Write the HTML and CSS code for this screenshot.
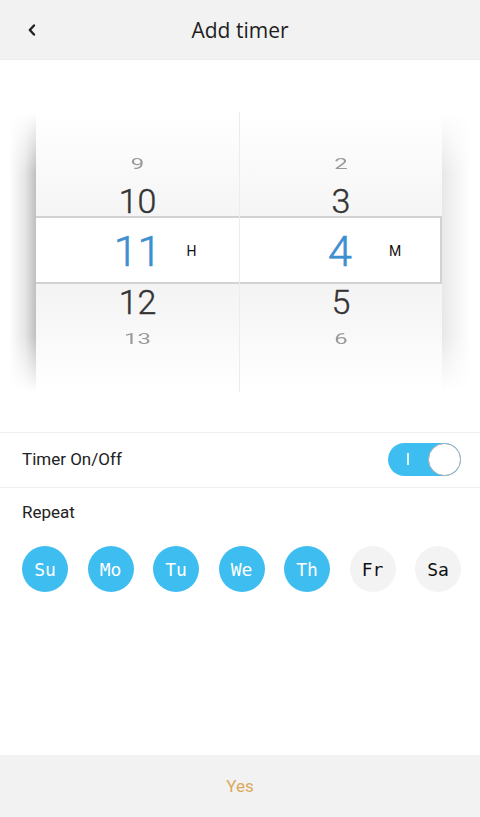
FILE: index.html
```html
<!DOCTYPE html>
<html lang="en">

<head>
  <meta charset="UTF-8">
  <meta name="viewport" content="width=device-width, initial-scale=1.0">
  <title>Add timer</title>
  <link rel="stylesheet" href="styles.css">
</head>

<body>
  <header class="topbar">
    <button class="back" aria-label="Back">
      <svg width="10" height="14" viewBox="0 0 10 14">
        <polyline points="7,2.5 2.8,7 7,11.5" fill="none" stroke="#222" stroke-width="2.4" stroke-linecap="round" stroke-linejoin="round"/>
      </svg>
    </button>
    <h1 class="title">Add timer</h1>
  </header>

  <section class="picker-area">
    <div class="shade shade-left"></div>
    <div class="picker">
      <div class="wheel">
        <div class="item far">9</div>
        <div class="item near">10</div>
        <div class="item selected"><span></span><span class="value">11</span><span class="unit">H</span></div>
        <div class="item near">12</div>
        <div class="item far">13</div>
      </div>
      <div class="wheel wheel-right">
        <div class="item far">2</div>
        <div class="item near">3</div>
        <div class="item selected"><span></span><span class="value">4</span><span class="unit">M</span></div>
        <div class="item near">5</div>
        <div class="item far">6</div>
      </div>
    </div>
    <div class="shade shade-right"></div>
  </section>

  <div class="row timer-row">
    <span class="label">Timer On/Off</span>
    <div class="switch on">
      <span class="mark"></span>
      <span class="knob"></span>
    </div>
  </div>

  <div class="row repeat-row">
    <span class="label">Repeat</span>
  </div>

  <div class="days">
    <span class="day active">Su</span>
    <span class="day active">Mo</span>
    <span class="day active">Tu</span>
    <span class="day active">We</span>
    <span class="day active">Th</span>
    <span class="day">Fr</span>
    <span class="day">Sa</span>
  </div>

  <footer class="footer">
    <button class="confirm">Yes</button>
  </footer>
</body>

</html>
```

FILE: styles.css
```css
html, body {
  height: 100%;
}

body {
  margin: 0;
  font-family: Roboto, "Noto Sans", Arial, sans-serif;
  background: #fff;
  color: #222;
  display: flex;
  flex-direction: column;
}

.topbar {
  height: 60px;
  flex-shrink: 0;
  background: #f2f2f2;
  border-bottom: 1px solid #ededed;
  box-sizing: border-box;
  display: grid;
  grid-template-columns: 64px 1fr 64px;
  align-items: center;
}

.back {
  background: none;
  border: none;
  padding: 0;
  height: 100%;
  display: flex;
  align-items: center;
  justify-content: center;
  cursor: pointer;
}

.title {
  margin: 0;
  text-align: center;
  font-weight: 400;
  font-size: 21px;
  color: #1e1e1e;
  font-family: "Open Sans", Roboto, sans-serif;
}

/* picker */
.picker-area {
  display: flex;
  padding: 52px 0 40px;
}

.shade {
  height: 280px;
  -webkit-mask-image: linear-gradient(to bottom, transparent 0, #000 22%, #000 80%, transparent 100%);
  mask-image: linear-gradient(to bottom, transparent 0, #000 22%, #000 80%, transparent 100%);
}

.shade-left {
  width: 36px;
  background: linear-gradient(to right, rgba(0, 0, 0, 0) 25%, rgba(0, 0, 0, 0.1) 70%, rgba(0, 0, 0, 0.25) 100%);
}

.shade-right {
  width: 38px;
  background: linear-gradient(to left, rgba(0, 0, 0, 0) 25%, rgba(0, 0, 0, 0.04) 60%, rgba(0, 0, 0, 0.09) 100%);
}

.picker {
  flex: 1;
  height: 280px;
  display: grid;
  grid-template-columns: 1fr 1fr;
  background: linear-gradient(to bottom, #fff 0, #f5f5f5 37%, #f4f4f4 63%, #fff 100%);
}

.wheel {
  display: flex;
  flex-direction: column;
  padding-top: 36px;
}

.wheel-right {
  border-left: 1px solid #ececec;
}

.item {
  display: flex;
  align-items: center;
  justify-content: center;
  line-height: 1;
  box-sizing: border-box;
}

.far {
  height: 30px;
  font-size: 24px;
  color: #9a9a9a;
  transform: scaleY(0.62);
}

.wheel .far:first-child {
  padding-top: 4px;
}

.wheel .far:last-child {
  padding-top: 8px;
}

.near {
  height: 38px;
  font-size: 34px;
  font-weight: 300;
  color: #333;
  -webkit-text-stroke: 0.4px #333;
}

.wheel .near:nth-child(2) {
  padding-top: 7px;
}

.wheel .near:nth-child(4) {
  padding-bottom: 2px;
}

.selected {
  height: 68px;
  background: #fff;
  border-top: 2px solid #d2d2d2;
  border-bottom: 2px solid #d2d2d2;
  display: grid;
  grid-template-columns: 1fr 98px 1fr;
  align-items: center;
}

.wheel-right .selected {
  border-right: 2px solid #d2d2d2;
}

.value {
  text-align: center;
  font-size: 43px;
  color: #3d8fd0;
  font-weight: 300;
  -webkit-text-stroke: 0.6px #3d8fd0;
  padding-top: 2px;
}

.unit {
  font-size: 14px;
  color: #111;
  padding-top: 2px;
}

/* rows */
.row {
  display: flex;
  align-items: center;
  justify-content: space-between;
  padding: 0 19px 0 22px;
}

.label {
  font-size: 17px;
  color: #222;
}

.timer-row {
  height: 56px;
  padding-bottom: 2px;
  box-sizing: border-box;
  border-top: 1px solid #efefef;
  border-bottom: 1px solid #efefef;
}

.switch {
  width: 73px;
  height: 33px;
  border-radius: 17px;
  background: #3ebdf1;
  display: flex;
  align-items: center;
  justify-content: space-between;
  padding: 0 0 0 19px;
  box-sizing: border-box;
}

.mark {
  width: 2px;
  height: 12px;
  background: #dff4fd;
}

.knob {
  width: 33px;
  height: 33px;
  border-radius: 50%;
  background: #fff;
  border: 1.5px solid #a6adb1;
  box-sizing: border-box;
}

.repeat-row {
  height: 48px;
}

.days {
  display: flex;
  justify-content: space-between;
  padding: 10px 19px 0 22px;
}

.day {
  width: 46px;
  height: 46px;
  border-radius: 50%;
  background: #f3f3f3;
  color: #111;
  display: flex;
  align-items: center;
  justify-content: center;
  font-family: "DejaVu Sans Mono", "Liberation Mono", monospace;
  font-size: 18px;
}

.day.active {
  background: #3ebdf1;
  color: #fff;
}

.footer {
  margin-top: auto;
  height: 62px;
  flex-shrink: 0;
  background: #f2f2f2;
  display: flex;
  align-items: center;
  justify-content: center;
}

.confirm {
  background: none;
  border: none;
  font-family: Roboto, sans-serif;
  font-size: 17px;
  color: #dca95c;
  cursor: pointer;
}
```
